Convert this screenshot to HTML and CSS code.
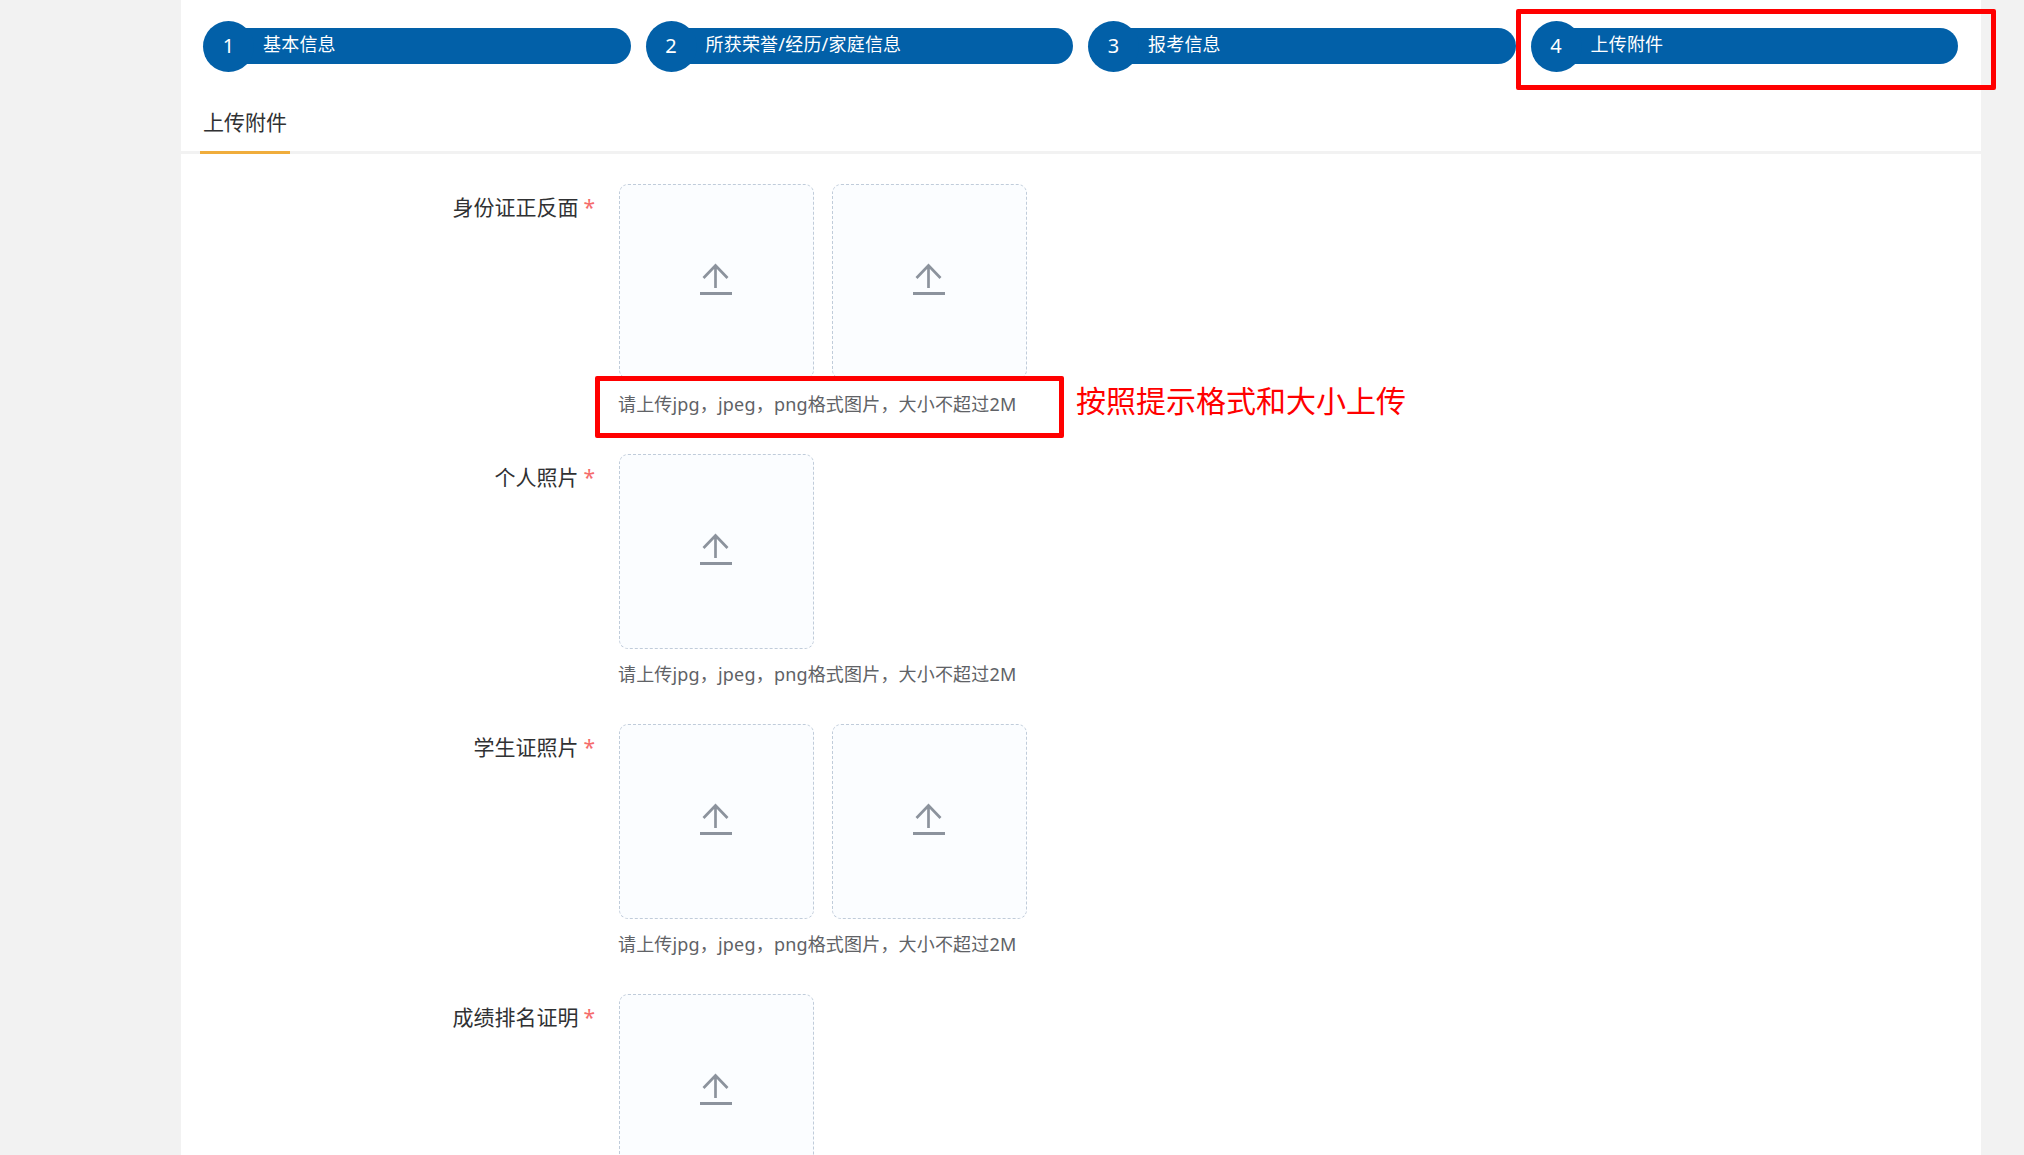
FILE: index.html
```html
<!DOCTYPE html>
<html lang="zh-CN">
<head>
<meta charset="utf-8">
<title>上传附件</title>
<link rel="stylesheet" href="styles.css">
</head>
<body>
<svg class="sprite" width="0" height="0" aria-hidden="true">
  <symbol id="up" viewBox="0 0 34 32">
    <path d="M16.5 25V2M4.5 15L16.5 2.5L28.5 15" fill="none" stroke="currentColor" stroke-width="2.7"/>
    <path d="M1 30.5H33" fill="none" stroke="currentColor" stroke-width="3"/>
  </symbol>
</svg>
<main class="panel">
  <ol class="steps">
    <li class="step"><span class="step-num">1</span><span class="step-label">基本信息</span></li>
    <li class="step"><span class="step-num">2</span><span class="step-label">所获荣誉/经历/家庭信息</span></li>
    <li class="step"><span class="step-num">3</span><span class="step-label">报考信息</span></li>
    <li class="step"><span class="step-num">4</span><span class="step-label">上传附件</span><span class="mark mark-step"></span></li>
  </ol>
  <div class="tabs"><span class="tab">上传附件</span></div>
  <form class="form">
    <div class="row">
      <div class="label">身份证正反面<span class="star">*</span></div>
      <div class="field">
        <div class="uploads">
          <div class="upload"><svg class="icon"><use href="#up"/></svg></div>
          <div class="upload"><svg class="icon"><use href="#up"/></svg></div>
        </div>
        <div class="hint">请上传jpg，jpeg，png格式图片，大小不超过2M<span class="mark mark-hint"></span><span class="note">按照提示格式和大小上传</span></div>
      </div>
    </div>
    <div class="row">
      <div class="label">个人照片<span class="star">*</span></div>
      <div class="field">
        <div class="uploads">
          <div class="upload"><svg class="icon"><use href="#up"/></svg></div>
        </div>
        <div class="hint">请上传jpg，jpeg，png格式图片，大小不超过2M</div>
      </div>
    </div>
    <div class="row">
      <div class="label">学生证照片<span class="star">*</span></div>
      <div class="field">
        <div class="uploads">
          <div class="upload"><svg class="icon"><use href="#up"/></svg></div>
          <div class="upload"><svg class="icon"><use href="#up"/></svg></div>
        </div>
        <div class="hint">请上传jpg，jpeg，png格式图片，大小不超过2M</div>
      </div>
    </div>
    <div class="row">
      <div class="label">成绩排名证明<span class="star">*</span></div>
      <div class="field">
        <div class="uploads">
          <div class="upload"><svg class="icon"><use href="#up"/></svg></div>
        </div>
      </div>
    </div>
  </form>
</main>
</body>
</html>
```
FILE: styles.css
```css
* { box-sizing: border-box; }
html, body { height: 100%; overflow: hidden; }
body {
  margin: 0;
  padding-left: 181px;
  background: #f2f2f2;
  font-family: "Noto Sans", "Noto Sans CJK SC", "Liberation Sans", sans-serif;
  color: #303133;
}
.sprite { position: absolute; }
.panel {
  width: 1800px;
  min-height: 100%;
  background: #fff;
}
.steps {
  display: flex;
  gap: 15px;
  margin: 0;
  padding: 21px 23px 0 22px;
  list-style: none;
}
.step {
  position: relative;
  flex: 1;
  display: flex;
  height: 51px;
  color: #fff;
}
.step-num {
  position: relative;
  z-index: 1;
  flex: none;
  width: 51px;
  height: 51px;
  border-radius: 50%;
  background: #0260a8;
  font-size: 20px;
  line-height: 50px;
  text-align: center;
}
.step-label {
  flex: 1;
  height: 36px;
  margin: 7px 0 0 -20px;
  padding-left: 29px;
  border-radius: 0 18px 18px 0;
  background: #0260a8;
  font-size: 18px;
  letter-spacing: 0.2px;
  line-height: 32px;
}
.mark {
  position: absolute;
  border: 5px solid #ff0000;
  border-radius: 2px;
  pointer-events: none;
}
.mark-step {
  z-index: 2;
  left: -15px;
  top: -12px;
  width: 480px;
  height: 81px;
}
.tabs {
  height: 82px;
  padding: 31px 0 0 19px;
  border-bottom: 3px solid #f2f2f2;
}
.tab {
  display: block;
  width: 90px;
  height: 51px;
  padding-left: 3px;
  border-bottom: 3px solid #f0ad3c;
  font-size: 21px;
  line-height: 39px;
  color: #303133;
}
.form {
  padding-top: 30px;
}
.row {
  display: flex;
  margin-bottom: 25px;
}
.label {
  flex: none;
  width: 438px;
  padding: 5px 24px 0 0;
  font-size: 21px;
  line-height: 37px;
  text-align: right;
  color: #303133;
}
.star {
  margin-left: 5px;
  color: #f56c6c;
}
.field { flex: none; }
.uploads {
  display: flex;
  gap: 18px;
}
.upload {
  display: flex;
  align-items: center;
  justify-content: center;
  width: 195px;
  height: 195px;
  border: 1px dashed #c0ccda;
  border-radius: 9px;
  background: #fbfdff;
  color: #8c939d;
}
.icon {
  width: 34px;
  height: 32px;
  margin: -6px 1px 0 0;
  color: #8c939d;
}
.hint {
  position: relative;
  height: 50px;
  font-size: 18px;
  letter-spacing: 0.18px;
  line-height: 50px;
  text-indent: -1px;
  color: #606266;
  white-space: nowrap;
}
.mark-hint {
  left: -24px;
  top: -3px;
  width: 469px;
  height: 62px;
}
.note {
  position: absolute;
  left: 457px;
  top: 0;
  text-indent: 0;
  letter-spacing: 0;
  font-size: 30px;
  line-height: 44px;
  color: #ff0000;
}
```
